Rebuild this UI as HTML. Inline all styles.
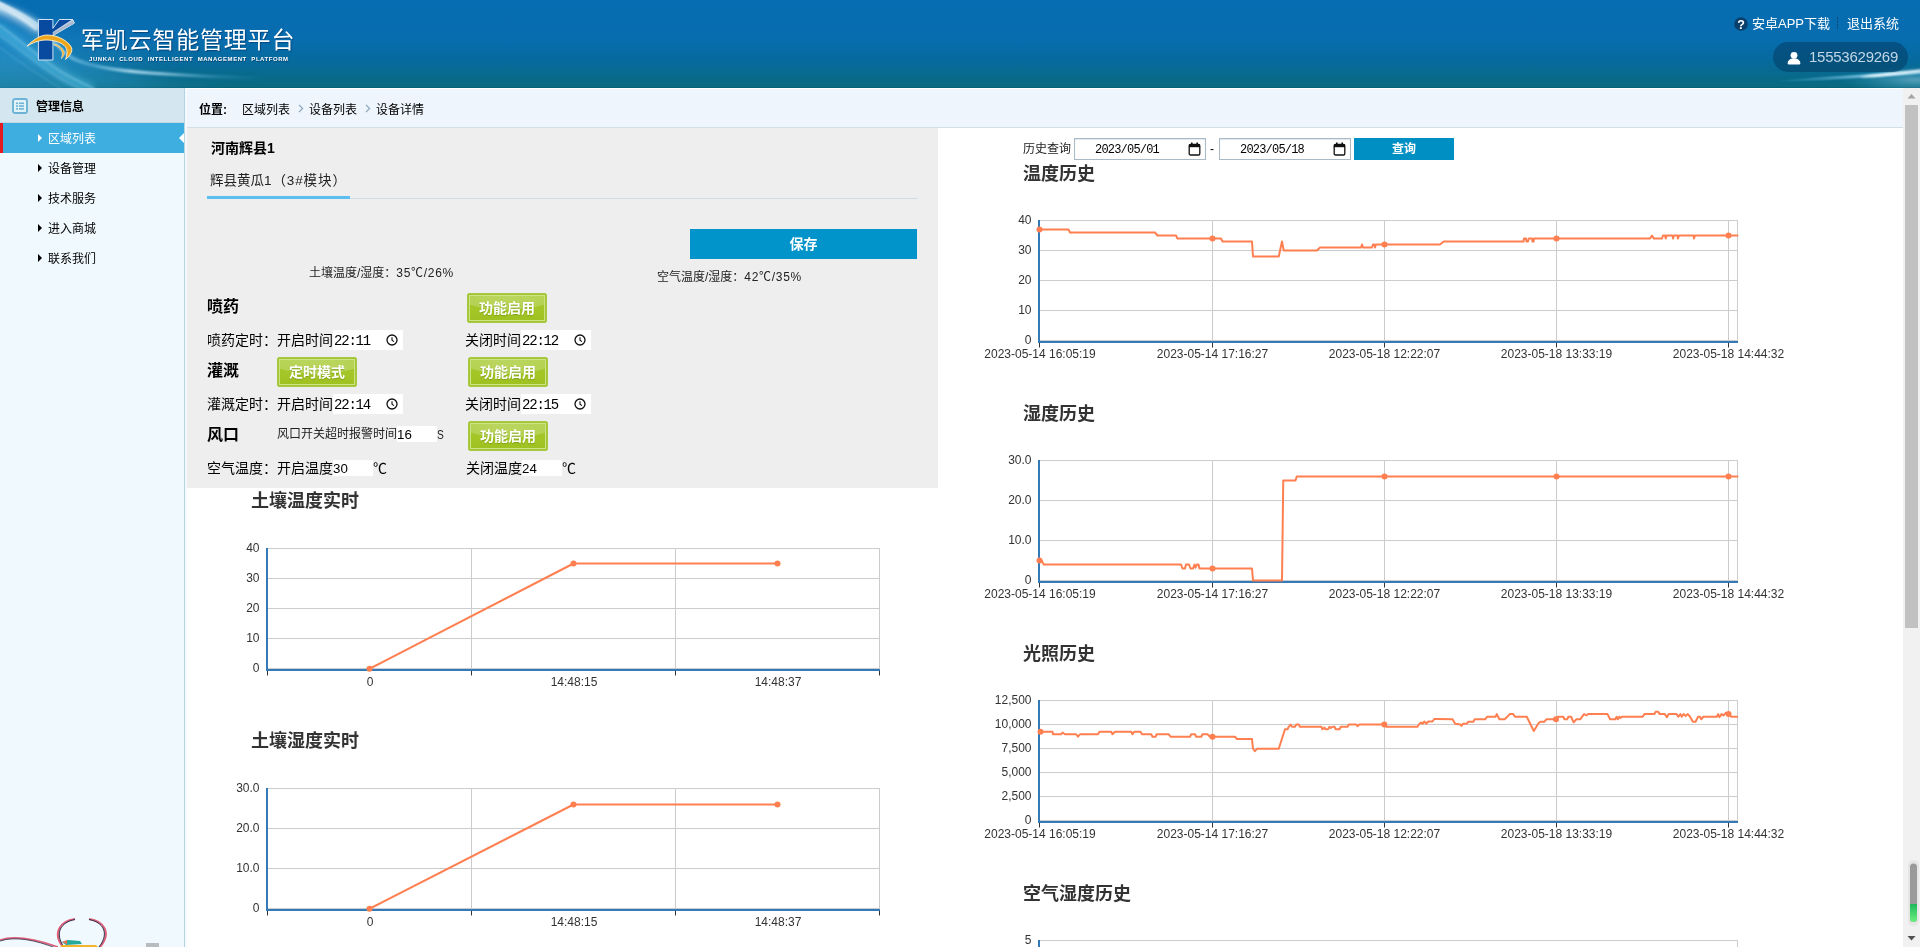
<!DOCTYPE html>
<html lang="zh-CN"><head><meta charset="utf-8"><title>军凯云智能管理平台</title>
<style>
*{box-sizing:border-box;margin:0;padding:0}
html,body{width:1920px;height:947px;overflow:hidden;background:#fff}
body{position:relative;font-family:"Liberation Sans","Noto Sans CJK SC",sans-serif;font-size:12px;color:#000}
.abs{position:absolute;white-space:nowrap}
/* header */
#hd{position:absolute;left:0;top:0;width:1920px;height:88px;overflow:hidden;background:linear-gradient(180deg,#076db2 0%,#076daf 45%,#066a9c 70%,#096a86 92%,#0a6a80 98.4%,#075c70 100%)}
#hd svg.bg{position:absolute;left:0;top:0}
#title{position:absolute;left:81px;top:25px;font-size:23px;line-height:30px;color:#fff;letter-spacing:0.8px;font-family:"Liberation Sans","Noto Sans CJK SC",sans-serif;font-weight:400;text-shadow:1px 1px 1px rgba(0,40,90,.55)}
#sub{position:absolute;left:89px;top:56px;font-size:12px;line-height:12px;color:#fff;font-weight:700;transform:scale(.5);transform-origin:0 0;letter-spacing:1.1px;word-spacing:4.6px;white-space:nowrap;text-shadow:1px 1px 1px rgba(0,40,90,.6)}
.toplnk{position:absolute;top:15px;font-size:13px;line-height:17px;color:#fff;white-space:nowrap}
#pill{position:absolute;left:1773px;top:42px;width:135px;height:30px;border-radius:15px;background:rgba(3,60,100,.55)}
#pill span{position:absolute;left:36px;top:5px;font-size:15px;line-height:20px;color:#c3d7e6;letter-spacing:-0.25px}
/* sidebar */
#sb{position:absolute;left:0;top:88px;width:185px;height:859px;background:#f0f9fd;border-right:1px solid #b6d3e0}
#sbh{position:absolute;left:0;top:0;width:184px;height:35px;background:#d4e7f0;border-bottom:1px solid #c3d6df}
#sbh b{position:absolute;left:36px;top:11px;font-size:12px;line-height:16px;color:#000}
.mi{position:absolute;left:0;width:184px;height:30px;font-size:12px;line-height:30px;color:#000}
.mi span{position:absolute;left:48px;top:1px}
.mi i{position:absolute;left:38px;top:11px;width:0;height:0;border-left:4px solid #000;border-top:4px solid transparent;border-bottom:4px solid transparent}
.mi.on{background:#3eade0;color:#fff;border-left:3px solid #e6191e}
.mi.on span{left:45px}
.mi.on i{left:35px;border-left-color:#fff}
.mi.on em{position:absolute;right:0;top:10px;width:0;height:0;border-right:5px solid #fff;border-top:5px solid transparent;border-bottom:5px solid transparent}
/* breadcrumb */
#bc{position:absolute;left:186px;top:88px;width:1717px;height:40px;background:#eef5fc;border-bottom:1px solid #d2dfe7;border-left:1px solid #fff;border-top:1px solid #fff}
#bc span{position:absolute;top:13px;font-size:12px;line-height:16px;color:#000;white-space:nowrap}
/* panel */
#pn{position:absolute;left:186px;top:128px;width:752px;height:360px;background:#eeeeee}
.t14{font-size:14px;line-height:20px;color:#000}
.t12{font-size:12px;line-height:16px;color:#000}
.h16{font-size:16px;line-height:22px;font-weight:700;color:#000}
.gbtn{position:absolute;width:80px;height:30px;background:radial-gradient(ellipse 50px 15px at 50% 1px,#bbd661 0,#b5d253 96%,rgba(181,210,83,0) 100%),linear-gradient(180deg,#a6c72c 0%,#a3c526 60%,#9ec020 100%);border:1px solid #a6c944;border-radius:2px;box-shadow:inset 0 0 0 1px #a4c630, inset 0 0 0 2px #cde38a;color:#fff;font-size:14px;font-weight:700;line-height:28px;text-align:center;text-shadow:0 1px 1px rgba(90,120,0,.45)}
.inp{position:absolute;background:#fff;font-family:"Liberation Mono","DejaVu Sans Mono",monospace;font-size:14px;letter-spacing:-1.2px;color:#000}
.clk{position:absolute;width:12px;height:12px}
.bbtn{position:absolute;background:#0094cb;color:#fff;font-weight:700;text-align:center}
.date{position:absolute;width:132px;height:22px;background:#fff;border:1px solid #a9bac6;box-shadow:inset 0 1px 1px #dfe6ea;font-family:"Liberation Mono",monospace;font-size:12px;line-height:20px;color:#000;letter-spacing:-0.8px}
/* scrollbar */
#scr{position:absolute;left:1903px;top:88px;width:17px;height:859px;background:#f1f1f1}
#scr .th{position:absolute;left:2px;top:17px;width:13px;height:523px;background:#c1c1c1}
.ct{position:absolute;font-size:18px;line-height:24px;font-weight:700;color:#333;white-space:nowrap}
svg text{font-family:"Liberation Sans",sans-serif;font-size:12px;fill:#333}
body>*{will-change:transform}

</style></head>
<body>
<div id="hd">
<svg class="bg" width="1920" height="88" viewBox="0 0 1920 88">
<defs>
<linearGradient id="sw1" gradientUnits="userSpaceOnUse" x1="0" y1="0" x2="310" y2="0"><stop offset="0" stop-color="#ffffff" stop-opacity=".85"/><stop offset=".14" stop-color="#d8f1fd" stop-opacity=".6"/><stop offset=".3" stop-color="#8fd4f4" stop-opacity=".4"/><stop offset=".42" stop-color="#c8ecfb" stop-opacity=".8"/><stop offset=".52" stop-color="#bfe8fa" stop-opacity=".7"/><stop offset=".7" stop-color="#6ec6ec" stop-opacity=".25"/><stop offset=".85" stop-color="#5cc0e8" stop-opacity="0"/></linearGradient>
<radialGradient id="glow" cx=".5" cy=".5" r=".5"><stop offset="0" stop-color="#bfeaff" stop-opacity=".75"/><stop offset="1" stop-color="#49b6e6" stop-opacity="0"/></radialGradient>
<radialGradient id="lb" cx=".5" cy=".5" r=".5"><stop offset="0" stop-color="#46aee6" stop-opacity=".7"/><stop offset=".6" stop-color="#3aa3dc" stop-opacity=".35"/><stop offset="1" stop-color="#2a90cc" stop-opacity="0"/></radialGradient>
<linearGradient id="fanf" x1="0" y1="0" x2="1" y2="0"><stop offset="0" stop-color="#36a4dc" stop-opacity="1"/><stop offset=".6" stop-color="#36a4dc" stop-opacity=".7"/><stop offset="1" stop-color="#36a4dc" stop-opacity="0"/></linearGradient>
<filter id="bl" x="-10%" y="-50%" width="120%" height="200%"><feGaussianBlur stdDeviation="1.1"/></filter>
<filter id="bl2" x="-10%" y="-50%" width="120%" height="200%"><feGaussianBlur stdDeviation="3.5"/></filter>
</defs>
<ellipse cx="20" cy="62" rx="170" ry="48" fill="url(#lb)" opacity=".45"/>
<g filter="url(#bl2)">
<path d="M-10 0 C 30 14, 55 40, 80 60 C 110 74, 160 80, 230 82 L 230 92 L -10 92 Z" fill="url(#fanf)" opacity=".32"/>
<path d="M-10 1 C 12 8, 30 16, 44 27 L 38 32 C 24 22, 8 14, -10 9 Z" fill="#eaf8ff" opacity=".85"/>
</g>
<g filter="url(#bl2)" opacity=".55">
<path d="M-5 26 C 15 40, 35 58, 60 74 C 72 81, 82 85, 92 89" fill="none" stroke="#5cc6ea" stroke-width="9"/>
</g>
<g filter="url(#bl)" fill="none" stroke-linecap="round">
<path d="M-5 1 C 15 10, 30 18, 40 27 C 52 38, 60 50, 72 58 C 90 67, 120 71, 150 73 C 190 76, 240 78, 310 79" stroke="url(#sw1)" stroke-width="3.2"/>
<path d="M-5 5 C 12 12, 26 20, 36 29" stroke="#fff" stroke-width="3" opacity=".6"/>
<path d="M-5 22 C 15 36, 35 54, 60 71 C 72 78, 82 83, 95 89" stroke="#bfeafa" stroke-width="1" opacity=".6"/>
<path d="M-5 32 C 15 46, 35 62, 56 76 C 66 82, 74 86, 82 89" stroke="#bfeafa" stroke-width=".8" opacity=".5"/>
<path d="M-5 44 C 12 56, 30 70, 62 89" stroke="#a5dcf5" stroke-width=".8" opacity=".4"/>
</g>
<ellipse cx="1915" cy="80" rx="75" ry="14" fill="url(#glow)" opacity=".55"/>
<ellipse cx="1880" cy="75" rx="105" ry="3.2" fill="url(#glow)" transform="rotate(-3.5 1880 75)"/>
<ellipse cx="1905" cy="72.5" rx="45" ry="1.6" fill="#f2fbff" opacity=".9" transform="rotate(-6 1905 72.5)" filter="url(#bl)"/>
<!-- logo -->
<g stroke-linejoin="round">
<path d="M38.4 19.5 H52.9 V28.4 L59.3 19.5 H72.6 L74.2 23 L52.9 35.3 V60 H38.4 Z" fill="#074a9f" stroke="#e6f0fa" stroke-width=".9"/>
<path d="M72.6 19.5 L74.4 23.2 L53 35.6 L53 32.3 Z" fill="#cfd9e6" stroke="#f4f8fc" stroke-width=".5"/>
<path d="M73.1 20.9 L53 33.1 M73.6 22 L53 34 M74 22.8 L53 34.9" stroke="#6f86ad" stroke-width=".45" fill="none"/>
<path d="M27 46.2 C 33 40, 40 35, 47 35 C 58 35, 68 41, 71.5 47.5 C 73 52, 69.5 56, 65.6 59.4 C 67 55, 68 51, 65.5 47 C 62 42.5, 54 40, 46 40 C 39 40, 32 43, 27 46.2 Z" fill="#f0a61a" stroke="#fff3d6" stroke-width=".9"/>
<path d="M53.6 43.9 C 58 44.5, 63 48, 64.2 52.5 C 64.6 55, 63 57, 61.2 58.6 C 62 56.5, 62.8 54, 62 51.5 C 61 48.5, 57.5 46, 54 45 Z" fill="#f0a61a" stroke="#fdf0d0" stroke-width=".6"/>
</g>
</svg>
<div id="title">军凯云智能管理平台</div>
<div id="sub">JUNKAI CLOUD INTELLIGENT MANAGEMENT PLATFORM</div>
<svg style="position:absolute;left:1734px;top:17px" width="14" height="14" viewBox="0 0 14 14"><circle cx="7" cy="7" r="6.8" fill="#0a3f6c"/><text x="7" y="11.6" text-anchor="middle" style="font-size:12.5px;font-weight:700;fill:#fff;font-family:'Liberation Sans',sans-serif">?</text></svg>
<div class="toplnk" style="left:1752px">安卓APP下载</div>
<div style="position:absolute;left:1837px;top:17px;width:0;height:12px;border-left:1px dotted #0b3f66"></div>
<div class="toplnk" style="left:1847px">退出系统</div>
<div id="pill">
<svg style="position:absolute;left:14px;top:9px" width="14" height="14" viewBox="0 0 14 14"><circle cx="7" cy="4.3" r="3.4" fill="#fff"/><path d="M0.8 13 C0.8 9.5 3 8 5 7.6 L9 7.6 C11 8 13.2 9.5 13.2 13 Z" fill="#fff"/><rect x="0.8" y="10" width="12.4" height="3.4" rx="1" fill="#fff"/></svg>
<span>15553629269</span></div>
</div>

<div id="sb">
<div id="sbh">
<svg style="position:absolute;left:12px;top:10px" width="16" height="16" viewBox="0 0 16 16"><rect x="1" y="1" width="14" height="14" rx="2" fill="#e3f1f9" stroke="#6db3d6" stroke-width="1.9"/><g fill="#6db3d6"><rect x="4" y="4.5" width="2" height="1.6"/><rect x="7" y="4.5" width="5" height="1.6"/><rect x="4" y="7.3" width="2" height="1.6"/><rect x="7" y="7.3" width="5" height="1.6"/><rect x="4" y="10.1" width="2" height="1.6"/><rect x="7" y="10.1" width="5" height="1.6"/></g></svg>
<b>管理信息</b></div>
<div class="mi on" style="top:35px"><i></i><span>区域列表</span><em></em></div>
<div class="mi" style="top:65px"><i></i><span>设备管理</span></div>
<div class="mi" style="top:95px"><i></i><span>技术服务</span></div>
<div class="mi" style="top:125px"><i></i><span>进入商城</span></div>
<div class="mi" style="top:155px"><i></i><span>联系我们</span></div>
<svg style="position:absolute;left:0;top:825px" width="160" height="34" viewBox="0 0 160 34">
<path d="M0 27 C 15 22, 35 26, 58 34" fill="none" stroke="#e0607a" stroke-width="1.6"/>
<path d="M0 28 C 15 23, 35 27, 56 35" fill="none" stroke="#2a2f4a" stroke-width=".8"/>
<path d="M75 6 C 60 8, 52 20, 63 34 M89 6 C 104 8, 112 20, 100 34" fill="none" stroke="#e0607a" stroke-width="2"/>
<path d="M75 6.5 C 61 9, 54 20, 64 34 M89 6.5 C 103 9, 110 20, 99 34" fill="none" stroke="#2a2f4a" stroke-width="1"/>
<path d="M62 29 L68 27 L80 28 L82 31 L66 32 Z" fill="#25a99b"/><path d="M62 29 L67 27 L67 31 Z" fill="#f0704a"/>
<path d="M62 32 L96 32 L98 34 L60 34 Z" fill="#f3b42a"/>
<rect x="146" y="30" width="13" height="4" fill="#b9bcbf"/>
</svg>
</div>
<div style="position:absolute;left:185px;top:88px;width:2px;height:859px;background:#f3f9fd;z-index:3"></div>
<div id="bc">
<span style="left:12px;font-weight:700">位置:</span>
<span style="left:55px">区域列表</span>
<svg style="position:absolute;left:111px;top:15px" width="6" height="9" viewBox="0 0 6 9"><path d="M1 .8 L4.6 4.5 L1 8.2" fill="none" stroke="#8aa6ba" stroke-width="1.2"/></svg>
<span style="left:122px">设备列表</span>
<svg style="position:absolute;left:178px;top:15px" width="6" height="9" viewBox="0 0 6 9"><path d="M1 .8 L4.6 4.5 L1 8.2" fill="none" stroke="#8aa6ba" stroke-width="1.2"/></svg>
<span style="left:189px">设备详情</span>
</div>
<div id="scr"><div class="th"></div>
<svg style="position:absolute;left:0;top:0" width="17" height="859" viewBox="0 0 17 859">
<path d="M4.5 10.5 L8.5 6 L12.5 10.5 Z" fill="#a3a3a3"/>
<path d="M4.5 848 L8.5 852.5 L12.5 848 Z" fill="#505050"/>
<defs><linearGradient id="gr" x1="0" y1="0" x2="0" y2="1"><stop offset="0" stop-color="#1fb85a"/><stop offset="1" stop-color="#6cf080"/></linearGradient></defs>
<rect x="5" y="772" width="11" height="66" rx="5.5" fill="#e6e6e6"/>
<rect x="7" y="775.5" width="7" height="58.5" rx="3.5" fill="#9a9a9a"/>
<path d="M7 816 h7 v14.5 a3.5 3.5 0 0 1 -7 0 Z" fill="url(#gr)"/>
</svg>
</div>

<div id="pn">
<div class="abs" style="left:25px;top:10px;font-size:14px;line-height:20px;font-weight:700">河南辉县1</div>
<div class="abs" style="left:24px;top:43px;font-size:13.5px;line-height:20px;color:#222">辉县黄瓜<span style="letter-spacing:.9px">1（3#模块）</span></div>
<div class="abs" style="left:21px;top:70px;width:711px;height:1px;background:#cfdde5"></div>
<div class="abs" style="left:21px;top:68px;width:143px;height:3px;background:#5bbdf0"></div>
<div class="bbtn" style="left:504px;top:101px;width:227px;height:30px;font-size:14px;line-height:30px">保存</div>
<div class="abs t12" style="left:123px;top:137px;color:#222">土壤温度/湿度：<span style="letter-spacing:.7px">35℃/26%</span></div>
<div class="abs t12" style="left:471px;top:141px;color:#222">空气温度/湿度：<span style="letter-spacing:.7px">42℃/35%</span></div>

<div class="abs h16" style="left:21px;top:168px">喷药</div>
<div class="gbtn" style="left:281px;top:165px">功能启用</div>

<div class="abs t14" style="left:21px;top:202px">喷药定时：</div>
<div class="abs t14" style="left:91px;top:202px">开启时间</div>
<div class="inp" style="left:147px;top:202px;width:70px;height:20px;line-height:23px;padding-left:1px">22:11</div>
<svg class="clk" style="left:200px;top:206px" viewBox="0 0 12 12"><circle cx="6" cy="6" r="5" fill="none" stroke="#111" stroke-width="1.3"/><path d="M6 3.2 V6.2 L8 7.6" fill="none" stroke="#111" stroke-width="1.1"/></svg>
<div class="abs t14" style="left:279px;top:202px">关闭时间</div>
<div class="inp" style="left:335px;top:202px;width:70px;height:20px;line-height:23px;padding-left:1px">22:12</div>
<svg class="clk" style="left:388px;top:206px" viewBox="0 0 12 12"><circle cx="6" cy="6" r="5" fill="none" stroke="#111" stroke-width="1.3"/><path d="M6 3.2 V6.2 L8 7.6" fill="none" stroke="#111" stroke-width="1.1"/></svg>

<div class="abs h16" style="left:21px;top:232px">灌溉</div>
<div class="gbtn" style="left:91px;top:229px">定时模式</div>
<div class="gbtn" style="left:282px;top:229px">功能启用</div>

<div class="abs t14" style="left:21px;top:266px">灌溉定时：</div>
<div class="abs t14" style="left:91px;top:266px">开启时间</div>
<div class="inp" style="left:147px;top:266px;width:70px;height:20px;line-height:23px;padding-left:1px">22:14</div>
<svg class="clk" style="left:200px;top:270px" viewBox="0 0 12 12"><circle cx="6" cy="6" r="5" fill="none" stroke="#111" stroke-width="1.3"/><path d="M6 3.2 V6.2 L8 7.6" fill="none" stroke="#111" stroke-width="1.1"/></svg>
<div class="abs t14" style="left:279px;top:266px">关闭时间</div>
<div class="inp" style="left:335px;top:266px;width:70px;height:20px;line-height:23px;padding-left:1px">22:15</div>
<svg class="clk" style="left:388px;top:270px" viewBox="0 0 12 12"><circle cx="6" cy="6" r="5" fill="none" stroke="#111" stroke-width="1.3"/><path d="M6 3.2 V6.2 L8 7.6" fill="none" stroke="#111" stroke-width="1.1"/></svg>

<div class="abs h16" style="left:21px;top:296px">风口</div>
<div class="abs t12" style="left:91px;top:298px;color:#222">风口开关超时报警时间</div>
<div class="inp" style="left:211px;top:298px;width:40px;height:16px;line-height:17.5px;letter-spacing:0;font-size:13.3px;font-family:'Liberation Sans',sans-serif">16</div>
<div class="abs t12" style="left:251px;top:299px;color:#222;transform:scaleX(.85);transform-origin:0 0">S</div>
<div class="gbtn" style="left:282px;top:293px">功能启用</div>

<div class="abs t14" style="left:21px;top:330px">空气温度：</div>
<div class="abs t14" style="left:91px;top:330px">开启温度</div>
<div class="inp" style="left:147px;top:332px;width:40px;height:16px;line-height:17.5px;letter-spacing:0;font-size:13.3px;font-family:'Liberation Sans',sans-serif">30</div>
<div class="abs t14" style="left:187px;top:330px">℃</div>
<div class="abs t14" style="left:280px;top:330px">关闭温度</div>
<div class="inp" style="left:336px;top:332px;width:40px;height:16px;line-height:17.5px;letter-spacing:0;font-size:13.3px;font-family:'Liberation Sans',sans-serif">24</div>
<div class="abs t14" style="left:376px;top:330px">℃</div>
</div>
<!-- history query -->
<div class="abs t12" style="left:1023px;top:141px;color:#222">历史查询</div>
<div class="date" style="left:1074px;top:138px"><span style="position:absolute;left:20px;top:1px">2023/05/01</span>
<svg style="position:absolute;left:113px;top:3px" width="13" height="14" viewBox="0 0 13 14"><rect x="1.2" y="2.4" width="10.6" height="10.6" rx="1.3" fill="none" stroke="#111" stroke-width="1.3"/><rect x="1" y="2.2" width="11" height="3" fill="#111"/><rect x="3" y=".5" width="1.6" height="2.5" fill="#111"/><rect x="8.4" y=".5" width="1.6" height="2.5" fill="#111"/></svg></div>
<div class="abs t12" style="left:1210px;top:141px">-</div>
<div class="date" style="left:1219px;top:138px"><span style="position:absolute;left:20px;top:1px">2023/05/18</span>
<svg style="position:absolute;left:113px;top:3px" width="13" height="14" viewBox="0 0 13 14"><rect x="1.2" y="2.4" width="10.6" height="10.6" rx="1.3" fill="none" stroke="#111" stroke-width="1.3"/><rect x="1" y="2.2" width="11" height="3" fill="#111"/><rect x="3" y=".5" width="1.6" height="2.5" fill="#111"/><rect x="8.4" y=".5" width="1.6" height="2.5" fill="#111"/></svg></div>
<div class="bbtn" style="left:1354px;top:138px;width:100px;height:22px;font-size:12px;line-height:22px;background:#008fc2">查询</div>

<svg style="position:absolute;left:0;top:0;will-change:transform" width="1920" height="947" viewBox="0 0 1920 947">
<path d="M267 548.5H880" stroke="#ccc" stroke-width="1"/>
<path d="M267 578.5H880" stroke="#ccc" stroke-width="1"/>
<path d="M267 608.5H880" stroke="#ccc" stroke-width="1"/>
<path d="M267 638.5H880" stroke="#ccc" stroke-width="1"/>
<path d="M267 668.5H880" stroke="#ccc" stroke-width="1"/>
<path d="M471.5 548V669" stroke="#ccc" stroke-width="1"/>
<path d="M675.5 548V669" stroke="#ccc" stroke-width="1"/>
<path d="M879.5 548V669" stroke="#ccc" stroke-width="1"/>
<path d="M267 548V671" stroke="#337ab7" stroke-width="2"/>
<path d="M266 670H880" stroke="#337ab7" stroke-width="2"/>
<path d="M267.5 671V675.5" stroke="#333" stroke-width="1"/>
<path d="M471.5 671V675.5" stroke="#333" stroke-width="1"/>
<path d="M675.5 671V675.5" stroke="#333" stroke-width="1"/>
<path d="M879.5 671V675.5" stroke="#333" stroke-width="1"/>
<text x="259.5" y="552" text-anchor="end">40</text>
<text x="259.5" y="582" text-anchor="end">30</text>
<text x="259.5" y="612" text-anchor="end">20</text>
<text x="259.5" y="642" text-anchor="end">10</text>
<text x="259.5" y="672" text-anchor="end">0</text>
<text x="370.0" y="686" text-anchor="middle">0</text>
<text x="574.0" y="686" text-anchor="middle">14:48:15</text>
<text x="778.0" y="686" text-anchor="middle">14:48:37</text>
<path d="M369.50 668.75 L573.50 563.50 L777.50 563.50" fill="none" stroke="#ff7f50" stroke-width="2" stroke-linejoin="round" stroke-linecap="round"/>
<circle cx="369.5" cy="668.75" r="3" fill="#ff7f50"/>
<circle cx="573.5" cy="563.5" r="3" fill="#ff7f50"/>
<circle cx="777.5" cy="563.5" r="3" fill="#ff7f50"/>
<path d="M267 788.5H880" stroke="#ccc" stroke-width="1"/>
<path d="M267 828.5H880" stroke="#ccc" stroke-width="1"/>
<path d="M267 868.5H880" stroke="#ccc" stroke-width="1"/>
<path d="M267 908.5H880" stroke="#ccc" stroke-width="1"/>
<path d="M471.5 788V909" stroke="#ccc" stroke-width="1"/>
<path d="M675.5 788V909" stroke="#ccc" stroke-width="1"/>
<path d="M879.5 788V909" stroke="#ccc" stroke-width="1"/>
<path d="M267 788V911" stroke="#337ab7" stroke-width="2"/>
<path d="M266 910H880" stroke="#337ab7" stroke-width="2"/>
<path d="M267.5 911V915.5" stroke="#333" stroke-width="1"/>
<path d="M471.5 911V915.5" stroke="#333" stroke-width="1"/>
<path d="M675.5 911V915.5" stroke="#333" stroke-width="1"/>
<path d="M879.5 911V915.5" stroke="#333" stroke-width="1"/>
<text x="259.5" y="792" text-anchor="end">30.0</text>
<text x="259.5" y="832" text-anchor="end">20.0</text>
<text x="259.5" y="872" text-anchor="end">10.0</text>
<text x="259.5" y="912" text-anchor="end">0</text>
<text x="370.0" y="926" text-anchor="middle">0</text>
<text x="574.0" y="926" text-anchor="middle">14:48:15</text>
<text x="778.0" y="926" text-anchor="middle">14:48:37</text>
<path d="M369.50 908.75 L573.50 804.50 L777.50 804.50" fill="none" stroke="#ff7f50" stroke-width="2" stroke-linejoin="round" stroke-linecap="round"/>
<circle cx="369.5" cy="908.75" r="3" fill="#ff7f50"/>
<circle cx="573.5" cy="804.5" r="3" fill="#ff7f50"/>
<circle cx="777.5" cy="804.5" r="3" fill="#ff7f50"/>
<path d="M1039 220.5H1738" stroke="#ccc" stroke-width="1"/>
<path d="M1039 250.5H1738" stroke="#ccc" stroke-width="1"/>
<path d="M1039 280.5H1738" stroke="#ccc" stroke-width="1"/>
<path d="M1039 310.5H1738" stroke="#ccc" stroke-width="1"/>
<path d="M1039 340.5H1738" stroke="#ccc" stroke-width="1"/>
<path d="M1212.5 220V341" stroke="#ccc" stroke-width="1"/>
<path d="M1384.5 220V341" stroke="#ccc" stroke-width="1"/>
<path d="M1556.5 220V341" stroke="#ccc" stroke-width="1"/>
<path d="M1728.5 220V341" stroke="#ccc" stroke-width="1"/>
<path d="M1737.5 220V341" stroke="#ccc" stroke-width="1"/>
<path d="M1039 220V343" stroke="#337ab7" stroke-width="2"/>
<path d="M1038 342H1738" stroke="#337ab7" stroke-width="2"/>
<path d="M1039.5 343V347.5" stroke="#333" stroke-width="1"/>
<path d="M1212.5 343V347.5" stroke="#333" stroke-width="1"/>
<path d="M1384.5 343V347.5" stroke="#333" stroke-width="1"/>
<path d="M1556.5 343V347.5" stroke="#333" stroke-width="1"/>
<path d="M1728.5 343V347.5" stroke="#333" stroke-width="1"/>
<text x="1031.5" y="224" text-anchor="end">40</text>
<text x="1031.5" y="254" text-anchor="end">30</text>
<text x="1031.5" y="284" text-anchor="end">20</text>
<text x="1031.5" y="314" text-anchor="end">10</text>
<text x="1031.5" y="344" text-anchor="end">0</text>
<text x="1040.0" y="358" text-anchor="middle">2023-05-14 16:05:19</text>
<text x="1212.5" y="358" text-anchor="middle">2023-05-14 17:16:27</text>
<text x="1384.5" y="358" text-anchor="middle">2023-05-18 12:22:07</text>
<text x="1556.5" y="358" text-anchor="middle">2023-05-18 13:33:19</text>
<text x="1728.5" y="358" text-anchor="middle">2023-05-18 14:44:32</text>
<path d="M1039.50 229.50 L1068.50 229.50 L1070.00 232.50 L1155.00 232.50 L1157.50 235.50 L1176.00 235.50 L1177.50 238.50 L1221.00 238.50 L1222.50 241.50 L1252.00 241.50 L1253.00 256.50 L1278.75 256.50 L1282.00 241.50 L1283.75 250.50 L1317.00 250.50 L1320.00 247.50 L1361.00 247.50 L1362.00 244.50 L1363.00 247.50 L1372.00 247.50 L1373.00 244.50 L1374.50 244.50 L1375.00 247.50 L1376.00 244.50 L1440.00 244.50 L1443.75 241.50 L1523.50 241.50 L1524.00 238.50 L1526.00 238.50 L1526.50 241.50 L1528.00 241.50 L1528.75 238.50 L1532.00 238.50 L1532.50 241.50 L1533.50 241.50 L1534.00 238.50 L1650.00 238.50 L1652.00 235.50 L1653.75 238.50 L1662.00 238.50 L1663.00 235.50 L1665.00 235.50 L1665.75 238.50 L1666.50 235.50 L1672.50 235.50 L1673.00 238.50 L1674.00 235.50 L1677.50 235.50 L1678.00 238.50 L1679.00 235.50 L1693.50 235.50 L1694.00 238.50 L1695.00 235.50 L1737.50 235.50" fill="none" stroke="#ff7f50" stroke-width="2" stroke-linejoin="round" stroke-linecap="round"/>
<circle cx="1039.5" cy="229.5" r="3" fill="#ff7f50"/>
<circle cx="1212.5" cy="238.5" r="3" fill="#ff7f50"/>
<circle cx="1384.5" cy="244.5" r="3" fill="#ff7f50"/>
<circle cx="1556.5" cy="238.5" r="3" fill="#ff7f50"/>
<circle cx="1728.5" cy="235.5" r="3" fill="#ff7f50"/>
<path d="M1039 460.5H1738" stroke="#ccc" stroke-width="1"/>
<path d="M1039 500.5H1738" stroke="#ccc" stroke-width="1"/>
<path d="M1039 540.5H1738" stroke="#ccc" stroke-width="1"/>
<path d="M1039 580.5H1738" stroke="#ccc" stroke-width="1"/>
<path d="M1212.5 460V581" stroke="#ccc" stroke-width="1"/>
<path d="M1384.5 460V581" stroke="#ccc" stroke-width="1"/>
<path d="M1556.5 460V581" stroke="#ccc" stroke-width="1"/>
<path d="M1728.5 460V581" stroke="#ccc" stroke-width="1"/>
<path d="M1737.5 460V581" stroke="#ccc" stroke-width="1"/>
<path d="M1039 460V583" stroke="#337ab7" stroke-width="2"/>
<path d="M1038 582H1738" stroke="#337ab7" stroke-width="2"/>
<path d="M1039.5 583V587.5" stroke="#333" stroke-width="1"/>
<path d="M1212.5 583V587.5" stroke="#333" stroke-width="1"/>
<path d="M1384.5 583V587.5" stroke="#333" stroke-width="1"/>
<path d="M1556.5 583V587.5" stroke="#333" stroke-width="1"/>
<path d="M1728.5 583V587.5" stroke="#333" stroke-width="1"/>
<text x="1031.5" y="464" text-anchor="end">30.0</text>
<text x="1031.5" y="504" text-anchor="end">20.0</text>
<text x="1031.5" y="544" text-anchor="end">10.0</text>
<text x="1031.5" y="584" text-anchor="end">0</text>
<text x="1040.0" y="598" text-anchor="middle">2023-05-14 16:05:19</text>
<text x="1212.5" y="598" text-anchor="middle">2023-05-14 17:16:27</text>
<text x="1384.5" y="598" text-anchor="middle">2023-05-18 12:22:07</text>
<text x="1556.5" y="598" text-anchor="middle">2023-05-18 13:33:19</text>
<text x="1728.5" y="598" text-anchor="middle">2023-05-18 14:44:32</text>
<path d="M1039.50 560.50 L1041.50 560.50 L1043.75 564.50 L1181.00 564.50 L1182.50 568.50 L1185.00 568.50 L1186.00 564.50 L1189.00 564.50 L1190.50 568.50 L1193.00 568.50 L1194.50 564.50 L1195.50 567.70 L1197.00 564.50 L1198.50 564.50 L1199.50 568.50 L1252.00 568.50 L1253.00 580.50 L1282.00 580.50 L1283.25 480.50 L1295.50 480.50 L1296.75 476.50 L1737.50 476.50" fill="none" stroke="#ff7f50" stroke-width="2" stroke-linejoin="round" stroke-linecap="round"/>
<circle cx="1039.5" cy="560.5" r="3" fill="#ff7f50"/>
<circle cx="1212.5" cy="568.5" r="3" fill="#ff7f50"/>
<circle cx="1384.5" cy="476.5" r="3" fill="#ff7f50"/>
<circle cx="1556.5" cy="476.5" r="3" fill="#ff7f50"/>
<circle cx="1728.5" cy="476.5" r="3" fill="#ff7f50"/>
<path d="M1039 700.5H1738" stroke="#ccc" stroke-width="1"/>
<path d="M1039 724.5H1738" stroke="#ccc" stroke-width="1"/>
<path d="M1039 748.5H1738" stroke="#ccc" stroke-width="1"/>
<path d="M1039 772.5H1738" stroke="#ccc" stroke-width="1"/>
<path d="M1039 796.5H1738" stroke="#ccc" stroke-width="1"/>
<path d="M1039 820.5H1738" stroke="#ccc" stroke-width="1"/>
<path d="M1212.5 700V821" stroke="#ccc" stroke-width="1"/>
<path d="M1384.5 700V821" stroke="#ccc" stroke-width="1"/>
<path d="M1556.5 700V821" stroke="#ccc" stroke-width="1"/>
<path d="M1728.5 700V821" stroke="#ccc" stroke-width="1"/>
<path d="M1737.5 700V821" stroke="#ccc" stroke-width="1"/>
<path d="M1039 700V823" stroke="#337ab7" stroke-width="2"/>
<path d="M1038 822H1738" stroke="#337ab7" stroke-width="2"/>
<path d="M1039.5 823V827.5" stroke="#333" stroke-width="1"/>
<path d="M1212.5 823V827.5" stroke="#333" stroke-width="1"/>
<path d="M1384.5 823V827.5" stroke="#333" stroke-width="1"/>
<path d="M1556.5 823V827.5" stroke="#333" stroke-width="1"/>
<path d="M1728.5 823V827.5" stroke="#333" stroke-width="1"/>
<text x="1031.5" y="704" text-anchor="end">12,500</text>
<text x="1031.5" y="728" text-anchor="end">10,000</text>
<text x="1031.5" y="752" text-anchor="end">7,500</text>
<text x="1031.5" y="776" text-anchor="end">5,000</text>
<text x="1031.5" y="800" text-anchor="end">2,500</text>
<text x="1031.5" y="824" text-anchor="end">0</text>
<text x="1040.0" y="838" text-anchor="middle">2023-05-14 16:05:19</text>
<text x="1212.5" y="838" text-anchor="middle">2023-05-14 17:16:27</text>
<text x="1384.5" y="838" text-anchor="middle">2023-05-18 12:22:07</text>
<text x="1556.5" y="838" text-anchor="middle">2023-05-18 13:33:19</text>
<text x="1728.5" y="838" text-anchor="middle">2023-05-18 14:44:32</text>
<path d="M1039.50 731.75 L1052.50 731.75 L1053.00 734.25 L1061.25 734.25 L1062.50 732.50 L1065.00 734.25 L1076.25 734.25 L1078.00 736.75 L1080.00 734.25 L1098.00 734.25 L1099.50 731.75 L1111.25 731.75 L1112.50 734.25 L1115.00 731.75 L1131.25 731.75 L1132.50 734.25 L1134.25 731.75 L1140.50 731.75 L1142.00 734.25 L1151.25 734.25 L1152.50 736.75 L1155.50 736.75 L1156.75 734.25 L1168.75 734.25 L1170.50 736.75 L1190.00 736.75 L1191.25 734.25 L1195.00 734.25 L1196.25 736.75 L1201.25 736.75 L1202.50 734.25 L1207.50 734.25 L1210.00 736.75 L1235.00 736.75 L1237.00 739.00 L1252.00 739.00 L1253.00 748.75 L1255.00 751.25 L1257.00 748.75 L1278.75 748.75 L1285.00 729.25 L1287.50 729.25 L1288.75 726.75 L1290.50 724.50 L1292.00 726.75 L1295.00 726.75 L1296.25 724.50 L1298.75 724.50 L1300.00 726.75 L1321.25 726.75 L1322.50 729.25 L1324.50 727.50 L1325.50 729.25 L1328.00 729.25 L1329.50 726.75 L1330.75 728.00 L1332.50 726.75 L1334.50 726.75 L1335.75 729.25 L1339.50 729.25 L1340.75 726.75 L1347.50 726.75 L1348.75 724.50 L1356.25 724.50 L1357.50 726.25 L1359.25 724.50 L1382.50 724.50 L1386.25 726.75 L1417.50 726.75 L1419.50 723.75 L1421.25 722.50 L1422.50 723.75 L1424.50 721.50 L1426.25 723.75 L1428.25 721.50 L1432.50 721.50 L1434.25 719.00 L1438.75 719.00 L1452.55 719.32 L1455.16 723.75 L1460.36 724.53 L1461.67 725.83 L1462.97 723.75 L1466.88 723.75 L1468.18 721.67 L1473.39 721.67 L1474.69 719.32 L1485.10 719.32 L1487.19 716.72 L1495.52 716.72 L1496.82 714.11 L1499.43 719.32 L1504.64 719.32 L1507.24 716.72 L1509.84 714.11 L1513.23 714.11 L1515.05 716.72 L1526.77 716.72 L1533.80 731.04 L1538.49 723.23 L1540.31 721.67 L1544.48 721.67 L1546.30 719.32 L1555.42 719.32 L1558.02 716.72 L1563.23 716.72 L1564.53 719.32 L1567.14 719.32 L1568.44 716.72 L1571.04 716.72 L1573.65 722.45 L1576.25 719.32 L1580.16 719.32 L1584.06 714.11 L1586.67 715.42 L1587.97 714.11 L1607.50 714.11 L1610.10 719.32 L1615.31 719.32 L1616.61 716.72 L1617.92 719.32 L1619.22 716.72 L1620.52 718.02 L1621.82 716.72 L1642.66 716.72 L1644.48 714.11 L1654.38 714.11 L1655.68 711.77 L1658.28 711.77 L1659.58 714.11 L1664.79 714.11 L1666.88 717.24 L1668.70 714.11 L1676.51 714.11 L1678.33 716.72 L1680.42 714.11 L1681.72 716.72 L1683.54 714.11 L1685.62 715.94 L1687.71 714.11 L1689.53 715.94 L1692.92 721.67 L1695.52 721.67 L1698.12 716.72 L1699.95 716.72 L1701.25 719.32 L1703.33 716.72 L1716.88 716.72 L1718.18 714.11 L1719.48 717.24 L1721.56 714.11 L1723.39 715.42 L1725.99 712.81 L1728.59 714.11 L1731.20 716.72 L1737.19 716.72" fill="none" stroke="#ff7f50" stroke-width="2" stroke-linejoin="round" stroke-linecap="round"/>
<circle cx="1040.5" cy="731.8" r="3" fill="#ff7f50"/>
<circle cx="1212.5" cy="736.8" r="3" fill="#ff7f50"/>
<circle cx="1384.3" cy="724.5" r="3" fill="#ff7f50"/>
<circle cx="1556" cy="719.3" r="3" fill="#ff7f50"/>
<circle cx="1728.5" cy="714.1" r="3" fill="#ff7f50"/>
<path d="M1039 940.5H1738" stroke="#ccc" stroke-width="1"/>
<path d="M1737.5 940V1061" stroke="#ccc" stroke-width="1"/>
<path d="M1039 940V1063" stroke="#337ab7" stroke-width="2"/>
<path d="M1038 1062H1738" stroke="#337ab7" stroke-width="2"/>
<text x="1031.5" y="944" text-anchor="end">5</text>
<path d="M1039.00 1000.00 L1040.00 1000.00" fill="none" stroke="#ff7f50" stroke-width="2" stroke-linejoin="round" stroke-linecap="round"/>
</svg>
<div class="ct" style="left:251px;top:489px">土壤温度实时</div>
<div class="ct" style="left:251px;top:729px">土壤湿度实时</div>
<div class="ct" style="left:1023px;top:162px">温度历史</div>
<div class="ct" style="left:1023px;top:402px">湿度历史</div>
<div class="ct" style="left:1023px;top:642px">光照历史</div>
<div class="ct" style="left:1023px;top:882px">空气湿度历史</div>
</body></html>
